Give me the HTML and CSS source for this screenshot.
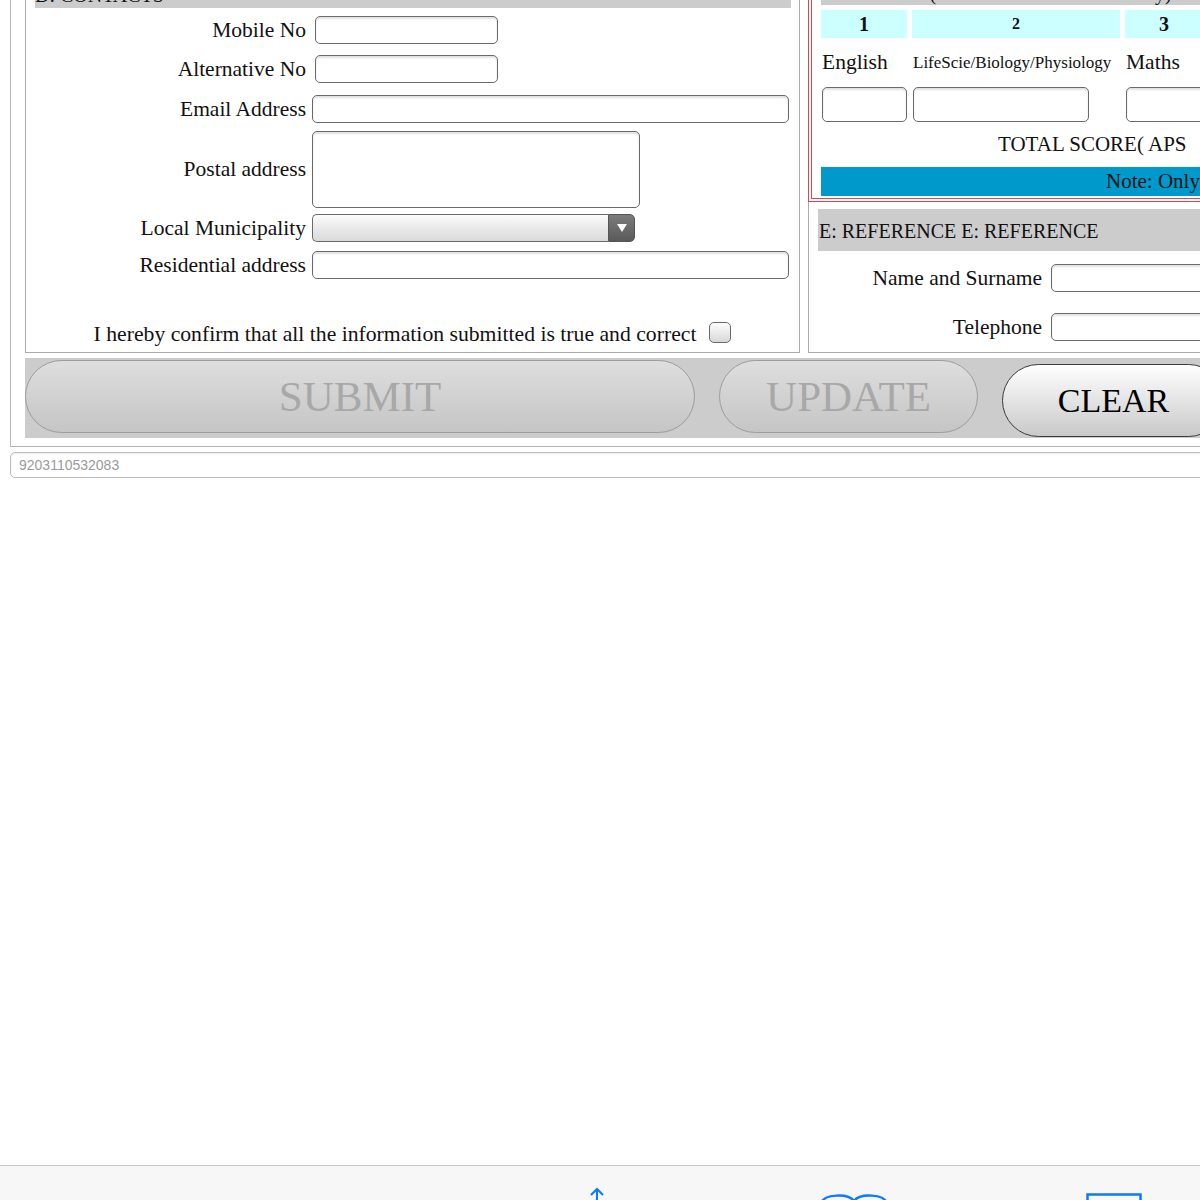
FILE: index.html
```html
<!DOCTYPE html>
<html lang="en">
<head>
    <meta charset="UTF-8">
    <meta name="viewport" content="width=device-width, initial-scale=1.0">
    <title>Application Form</title>
    <link rel="stylesheet" href="styles.css">
</head>
<body>
    <div class="page">
        <form class="form" onsubmit="return false;">
            <div class="columns">
                <!-- contact details -->
                <div class="panel contact">
                    <div class="section-title">D: CONTACTS</div>

                    <div class="row row-mobile">
                        <label>Mobile No</label>
                        <input type="text" class="field short">
                    </div>
                    <div class="row row-alt">
                        <label>Alternative No</label>
                        <input type="text" class="field short">
                    </div>
                    <div class="row row-email">
                        <label>Email Address</label>
                        <input type="text" class="field wide">
                    </div>
                    <div class="row row-postal">
                        <label>Postal address</label>
                        <textarea class="field postal"></textarea>
                    </div>
                    <div class="row row-muni">
                        <label>Local Municipality</label>
                        <div class="select">
                            <select></select>
                            <span class="arrow">
                                <svg width="10" height="8" viewBox="0 0 10 8"><path d="M0 0 H10 L5 8 Z" fill="#fff"/></svg>
                            </span>
                        </div>
                    </div>
                    <div class="row row-res">
                        <label>Residential address</label>
                        <input type="text" class="field wide">
                    </div>

                    <div class="confirm">
                        <span>I hereby confirm that all the information submitted is true and correct</span>
                        <input type="checkbox" class="check">
                    </div>
                </div>

                <div class="side">
                    <!-- matric scores -->
                    <div class="scores">
                        <div class="scores-title">C: SCORES (Grade 12 Final Results Only)</div>
                        <div class="grid">
                            <div class="num">1</div>
                            <div class="num small">2</div>
                            <div class="num">3</div>

                            <div class="subject">English</div>
                            <div class="subject small">LifeScie/Biology/Physiology</div>
                            <div class="subject">Maths</div>

                            <div><input type="text" class="field mark mark-eng"></div>
                            <div><input type="text" class="field mark mark-bio"></div>
                            <div><input type="text" class="field mark mark-maths"></div>
                        </div>
                        <div class="total">TOTAL SCORE( APS</div>
                        <div class="note">Note: Only Grade 12 final results will be considered</div>
                    </div>

                    <!-- reference -->
                    <div class="panel reference">
                        <div class="ref-title">E: REFERENCE E: REFERENCE</div>
                        <div class="ref-row ref-name">
                            <label>Name and Surname</label>
                            <input type="text" class="field ref-field">
                        </div>
                        <div class="ref-row ref-tel">
                            <label>Telephone</label>
                            <input type="text" class="field ref-field">
                        </div>
                    </div>
                </div>
            </div>

            <div class="actions">
                <button class="btn submit" disabled>SUBMIT</button>
                <button class="btn update" disabled>UPDATE</button>
                <button class="btn clear" type="reset">CLEAR</button>
            </div>
        </form>

        <input type="text" class="id-field" value="9203110532083" readonly>
    </div>

    <div class="toolbar">
        <svg class="tb-share" width="30" height="14" viewBox="0 0 30 14">
            <path d="M15 2 V14 M9 8 L15 2 L21 8" fill="none" stroke="#0a7aff" stroke-width="2"/>
        </svg>
        <svg class="tb-book" width="72" height="10" viewBox="0 0 72 10">
            <path d="M3 10 C6 1 30 0 36 8 C42 0 66 1 69 10" fill="none" stroke="#0a7aff" stroke-width="2.5"/>
        </svg>
        <svg class="tb-tabs" width="56" height="10" viewBox="0 0 56 10">
            <path d="M1.5 10 V1.5 H54.5 V10" fill="none" stroke="#0a7aff" stroke-width="2.5"/>
        </svg>
    </div>
</body>
</html>
```

FILE: styles.css
```css
* {
    margin: 0;
    padding: 0;
    box-sizing: border-box;
}

html, body {
    overflow: hidden;
}

body {
    background: #fff;
    font-family: "Liberation Serif", "Times New Roman", serif;
    color: #111;
}

.page {
    margin-top: -60px;
    padding-left: 10px;
    width: 1800px;
}

.form {
    border: 1px solid #b4b4b4;
    padding: 7px 0 8px 14px;
    width: 1700px;
}

.columns {
    display: flex;
    gap: 8px;
    align-items: stretch;
}

.panel {
    border: 1px solid #ababab;
}

/* ---- contact panel ---- */

.contact {
    width: 775px;
    padding: 9px 0 9px 0;
}

.section-title {
    margin: 0 8px 0 9px;
    background: #cccccc;
    font-size: 20px;
    line-height: 24px;
    padding: 25px 0 0 0;
    height: 50px;
    overflow: hidden;
}

.row {
    display: flex;
    align-items: center;
}

.row label,
.ref-row label {
    font-size: 21.5px;
    text-align: right;
    white-space: nowrap;
}

.row label {
    width: 280px;
}

.row-mobile { margin-top: 8px; }
.row-alt    { margin-top: 11px; }
.row-email  { margin-top: 12px; }
.row-postal { margin-top: 8px; }
.row-muni   { margin-top: 6px; }
.row-res    { margin-top: 9px; }

.field {
    height: 28px;
    border: 1px solid #6a6a6a;
    border-radius: 5px;
    background: #fff;
    box-shadow: inset 0 2px 2px rgba(0, 0, 0, 0.12);
    outline: none;
    font-family: inherit;
    font-size: 16px;
    margin-left: 6px;
}

.field.short {
    width: 183px;
    margin-left: 9px;
}

.field.wide {
    width: 477px;
}

.field.postal {
    width: 328px;
    height: 77px;
    resize: none;
}

.select {
    display: flex;
    width: 323px;
    height: 28px;
    margin-left: 6px;
}

.select select {
    flex: 1;
    appearance: none;
    -webkit-appearance: none;
    border: 1px solid #6a6a6a;
    border-right: none;
    border-radius: 5px 0 0 5px;
    background: linear-gradient(#fbfbfb, #d9d9d9);
    outline: none;
}

.select .arrow {
    width: 27px;
    display: flex;
    align-items: center;
    justify-content: center;
    border: 1px solid #555;
    border-radius: 0 5px 5px 0;
    background: linear-gradient(#7b7b7b, #5a5a5a);
}

.confirm {
    margin-top: 43px;
    display: flex;
    align-items: center;
    justify-content: center;
    gap: 13px;
    font-size: 21.7px;
    height: 21px;
}

.confirm span {
    padding-top: 3px;
}

.check {
    appearance: none;
    -webkit-appearance: none;
    width: 22px;
    height: 21px;
    border: 1px solid #6a6a6a;
    border-radius: 5px;
    background: linear-gradient(#fdfdfd, #d8d8d8);
}

/* ---- right column ---- */

.side {
    width: 800px;
    display: flex;
    flex-direction: column;
}

.scores {
    border: 4px double #d9454a;
    padding: 13px 0 2px 9px;
}

.scores-title {
    background: #cccccc;
    font-size: 20px;
    line-height: 24px;
    height: 40px;
    padding-top: 16px;
    overflow: hidden;
    padding-left: 4px;
}

.grid {
    display: grid;
    grid-template-columns: 86px 208px 78px;
    grid-template-rows: 28px 49px 35px;
    column-gap: 5px;
    margin-top: 5px;
}

.num {
    background: #ccffff;
    font-weight: bold;
    font-size: 20px;
    text-align: center;
    line-height: 28px;
}

.num.small {
    font-size: 16px;
}

.subject {
    font-size: 21.5px;
    display: flex;
    align-items: center;
    padding-left: 1px;
    white-space: nowrap;
}

.subject.small {
    font-size: 17px;
}

.mark {
    height: 35px;
    margin-left: 1px;
}

.mark-eng   { width: 85px; }
.mark-bio   { width: 176px; }
.mark-maths { width: 90px; }

.total {
    height: 45px;
    line-height: 45px;
    font-size: 21px;
    padding-left: 177px;
    white-space: nowrap;
}

.note {
    background: #0099cc;
    height: 29px;
    line-height: 29px;
    font-size: 21px;
    padding-left: 285px;
    white-space: nowrap;
    color: #111;
}

.reference {
    flex: 1;
    border-top: none;
    padding: 7px 0 0 0;
}

.ref-title {
    margin-left: 9px;
    background: #cccccc;
    height: 42px;
    line-height: 42px;
    font-size: 20px;
    padding-left: 1px;
    padding-top: 1px;
    white-space: nowrap;
}

.ref-row {
    display: flex;
    align-items: center;
}

.ref-row label {
    width: 233px;
}

.ref-name { margin-top: 13px; }
.ref-tel  { margin-top: 21px; }

.field.ref-field {
    width: 300px;
    margin-left: 9px;
}

/* ---- buttons ---- */

.actions {
    margin-top: 5px;
    background: #cccccc;
    height: 80px;
    padding-top: 2px;
    display: flex;
    align-items: flex-start;
    gap: 24px;
}

.btn {
    height: 73px;
    border-radius: 37px;
    font-family: "Liberation Serif", "Times New Roman", serif;
    cursor: pointer;
}

.submit,
.update {
    border: 1px solid #9c9c9c;
    background: linear-gradient(#dedede, #c5c5c5);
    color: #a8a8a8;
    font-size: 43px;
    cursor: default;
}

.submit {
    width: 670px;
}

.update {
    width: 259px;
}

.clear {
    width: 223px;
    margin-top: 4px;
    border: 1px solid #3c3c3c;
    background: linear-gradient(#ffffff, #c9c9c9);
    color: #000;
    font-size: 34px;
}

.id-field {
    display: block;
    margin-top: 5px;
    width: 1300px;
    height: 26px;
    border: 1px solid #bdbdbd;
    border-radius: 5px;
    box-shadow: inset 0 1px 2px rgba(0, 0, 0, 0.08);
    font-family: "Liberation Sans", Arial, sans-serif;
    font-size: 14px;
    color: #9a9a9a;
    padding-left: 8px;
    outline: none;
}

/* ---- browser toolbar ---- */

.toolbar {
    position: fixed;
    left: 0;
    bottom: 0;
    width: 100%;
    height: 35px;
    border-top: 1px solid #c6c6c6;
    background: #f7f7f7;
    display: flex;
    align-items: flex-start;
}

.tb-share {
    margin-left: 582px;
    margin-top: 21px;
}

.tb-book {
    margin-left: 206px;
    margin-top: 27px;
}

.tb-tabs {
    margin-left: 196px;
    margin-top: 27px;
}
```
